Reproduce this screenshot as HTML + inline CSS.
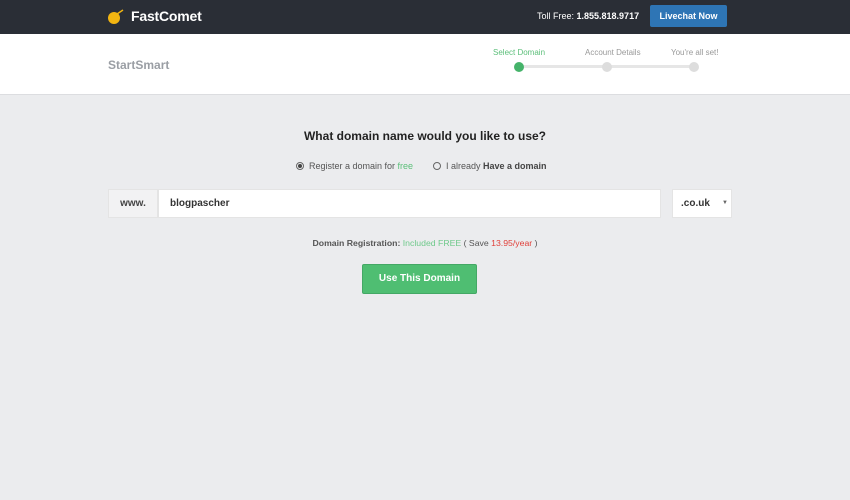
<!DOCTYPE html>
<html><head><style>
*{margin:0;padding:0;box-sizing:border-box}
body{width:850px;height:500px;background:#ebecee;font-family:"Liberation Sans",sans-serif;position:relative;overflow:hidden}
.top{position:absolute;left:0;top:0;width:850px;height:34px;background:#2a2e36}
.sub{position:absolute;left:0;top:34px;width:850px;height:61px;background:#fff;border-bottom:1px solid #dcdde0}
.a{position:absolute;white-space:nowrap}
</style></head><body>
<div class="top">
 <svg class="a" style="left:107px;top:9px" width="18" height="16"><circle cx="7" cy="9" r="6" fill="#f2b511"/><path d="M10 5 L16 1" stroke="#f2b511" stroke-width="1.5"/></svg>
 <div class="a" style="left:131px;top:8px;color:#fff;font-weight:bold;font-size:14px;letter-spacing:-0.2px">FastComet</div>
 <div class="a" style="left:537px;top:11px;color:#fff;font-size:9px">Toll Free: <b>1.855.818.9717</b></div>
 <div class="a" style="left:650px;top:5px;width:77px;height:22px;background:#2e75b5;border-radius:2px;color:#fff;font-weight:bold;font-size:9px;text-align:center;line-height:22px">Livechat Now</div>
</div>
<div class="sub">
 <div class="a" style="left:108px;top:24px;color:#9a9ea4;font-weight:bold;font-size:12px">StartSmart</div>
 <div class="a" style="left:493px;top:14px;color:#5cbf7a;font-size:8px">Select Domain</div>
 <div class="a" style="left:585px;top:14px;color:#999;font-size:8px">Account Details</div>
 <div class="a" style="left:671px;top:14px;color:#999;font-size:8px">You're all set!</div>
 <div class="a" style="left:519px;top:31px;width:175px;height:3px;background:#e6e6e6"></div>
 <div class="a" style="left:514px;top:28px;width:10px;height:10px;border-radius:50%;background:#45b36a"></div>
 <div class="a" style="left:602px;top:28px;width:10px;height:10px;border-radius:50%;background:#ddd"></div>
 <div class="a" style="left:689px;top:28px;width:10px;height:10px;border-radius:50%;background:#ddd"></div>
</div>
<div class="a" style="left:0;width:850px;top:129px;text-align:center;font-weight:bold;font-size:12px;color:#222">What domain name would you like to use?</div>
<div class="a" style="left:296px;top:162px;width:8px;height:8px;border:1px solid #666;border-radius:50%"><div style="width:4px;height:4px;margin:1px;background:#444;border-radius:50%"></div></div>
<div class="a" style="left:309px;top:161px;font-size:9px;color:#555">Register a domain for <span style="color:#5cbf7a">free</span></div>
<div class="a" style="left:433px;top:162px;width:8px;height:8px;border:1px solid #666;border-radius:50%"></div>
<div class="a" style="left:446px;top:161px;font-size:9px;color:#555">I already <b style="color:#444">Have a domain</b></div>
<div class="a" style="left:108px;top:189px;width:50px;height:29px;background:#f2f2f3;border:1px solid #e4e4e4;font-size:10px;color:#444;text-align:center;line-height:27px;font-weight:bold">www.</div>
<div class="a" style="left:158px;top:189px;width:503px;height:29px;background:#fff;border:1px solid #e4e4e4;font-size:10px;color:#333;line-height:27px;padding-left:11px;font-weight:bold">blogpascher</div>
<div class="a" style="left:672px;top:189px;width:60px;height:29px;background:#fff;border:1px solid #e4e4e4;font-size:10px;color:#333;line-height:27px;padding-left:8px;font-weight:bold">.co.uk<span style="position:absolute;left:49px;font-size:6px;color:#666">▼</span></div>
<div class="a" style="left:0;width:850px;top:238px;text-align:center;font-size:8.7px;color:#555"><b>Domain Registration:</b> <span style="color:#6fc98b">Included FREE</span> ( Save <span style="color:#e0403a">13.95/year</span> )</div>
<div class="a" style="left:362px;top:264px;width:115px;height:30px;background:#4fbe72;border:1px solid #44a865;border-radius:2px;color:#fff;font-weight:bold;font-size:10px;text-align:center;line-height:28px">Use This Domain</div>
</body></html>
